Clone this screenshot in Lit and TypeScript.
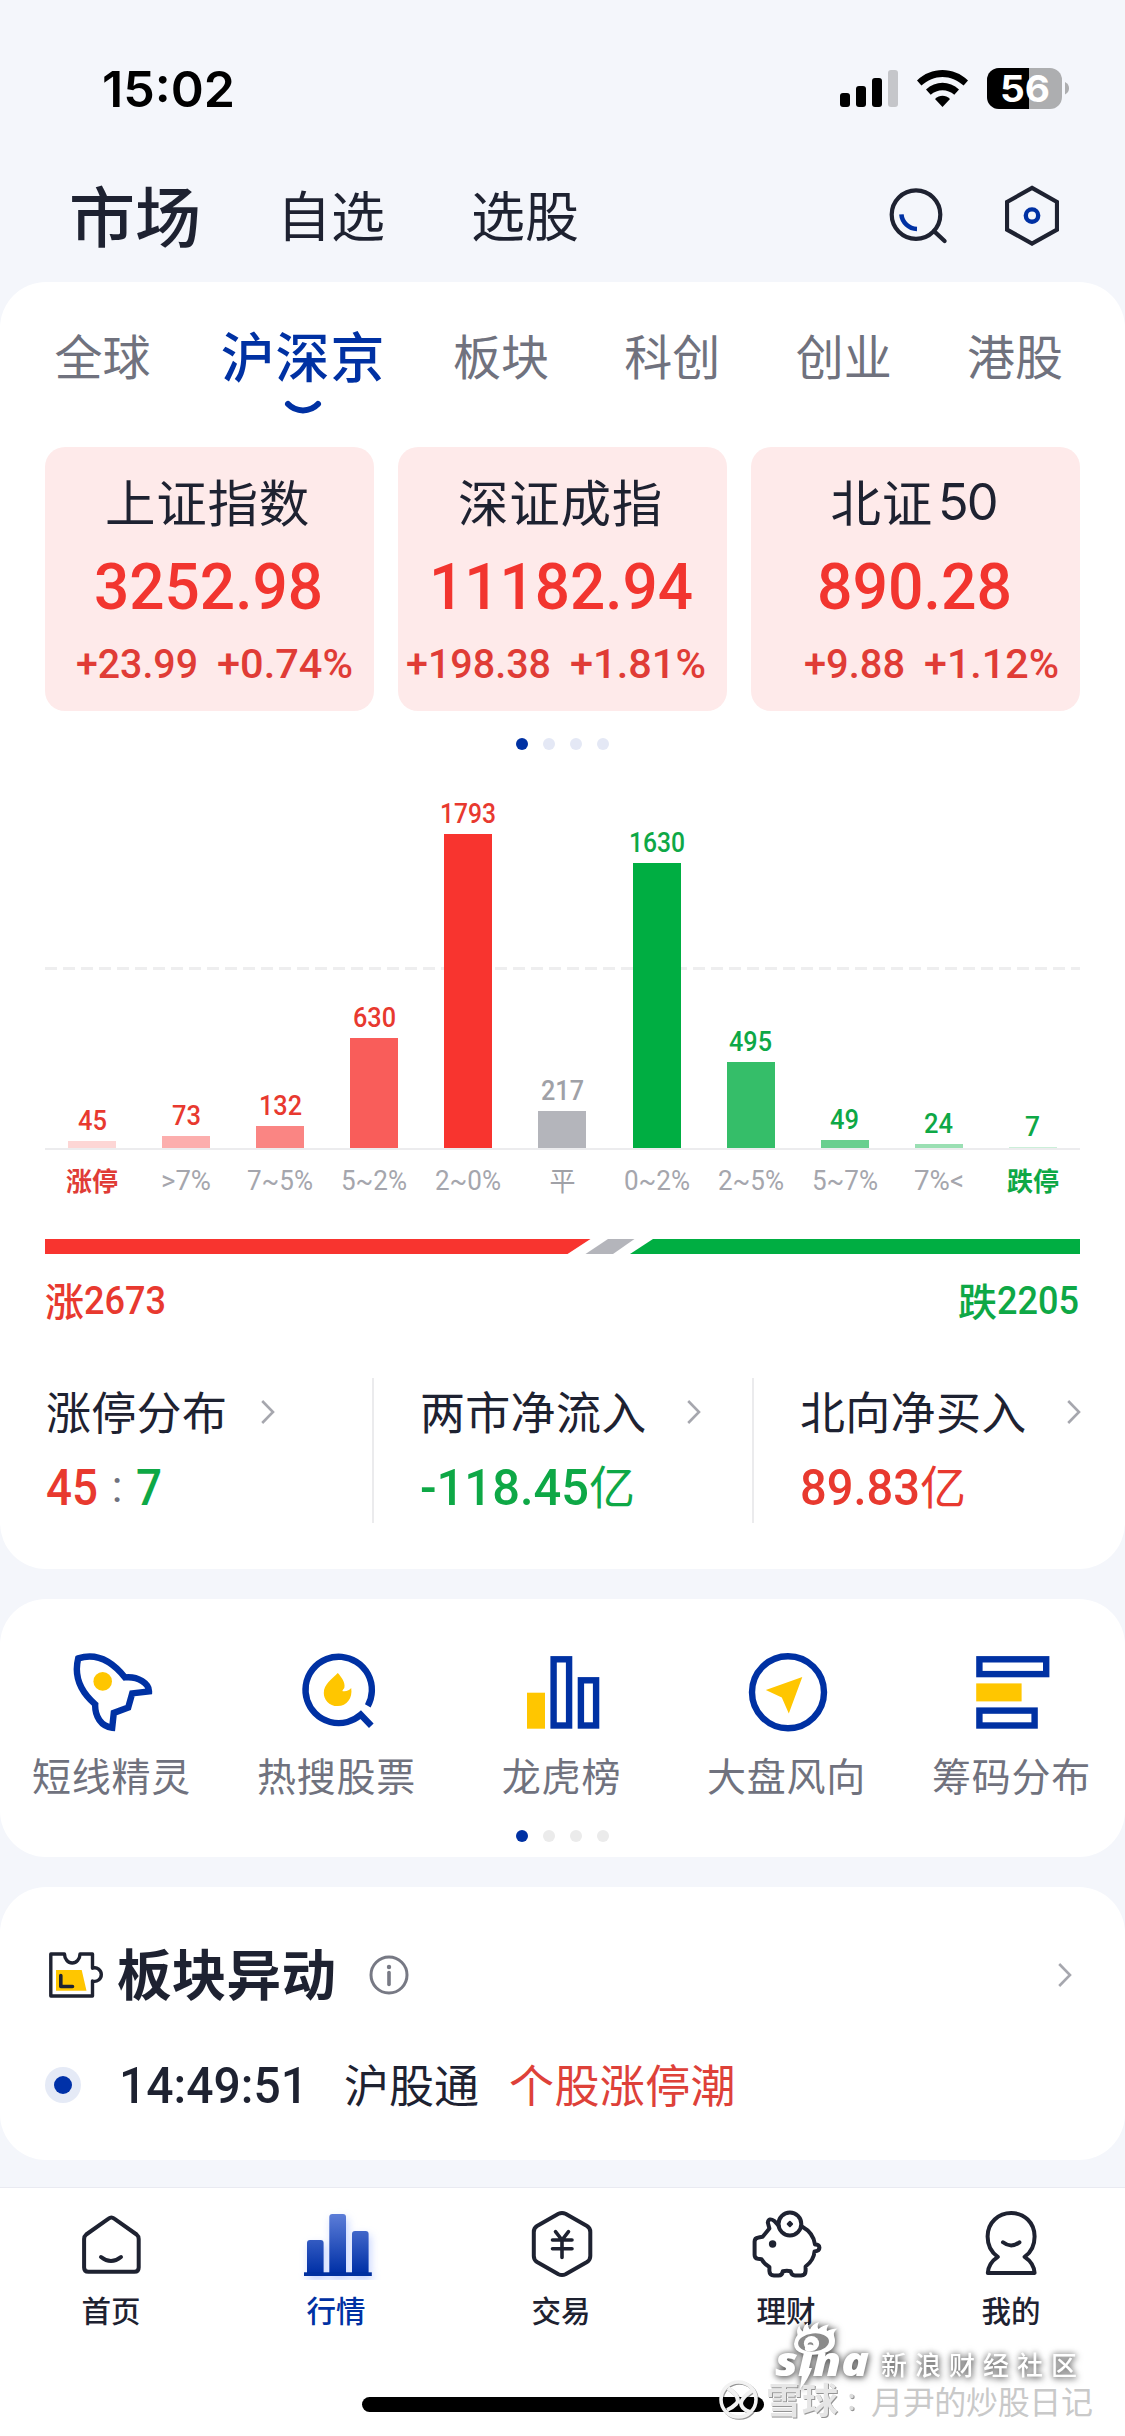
import { LitElement, html, svg, css, TemplateResult } from "lit";
import { customElement, property } from "lit/decorators.js";

/** Numeric text drawn to an exact advance width; its box is the cap-height box. */
@customElement("fit-text")
export class FitText extends LitElement {
  @property() text = "";
  @property({ type: Number }) width = 100;
  @property({ type: Number }) size = 24;
  @property({ type: Number }) cap = 0.711;

  static styles = css`
    :host { display: block; flex: none; }
    .box { display: block; overflow: visible; fill: currentColor; }
  `;

  render() {
    const h = this.size * this.cap;
    return html`<svg class="box" width=${this.width} height=${h}>
      <text x="0" y=${h} font-size=${this.size} textLength=${this.width} lengthAdjust="spacingAndGlyphs">${this.text}</text>
    </svg>`;
  }
}

interface IndexQuote { name: string; digits?: string; value: string; w: number; diff: string; dw: number; pct: string; pw: number; }
interface Bucket { label: string; lw: number; count: string; cw: number; height: number; tone: string; color: string; }

const QUOTES: IndexQuote[] = [
  { name: "上证指数", value: "3252.98", w: 229, diff: "+23.99", dw: 122, pct: "+0.74%", pw: 136 },
  { name: "深证成指", value: "11182.94", w: 264, diff: "+198.38", dw: 145, pct: "+1.81%", pw: 136 },
  { name: "北证", digits: "50", value: "890.28", w: 195, diff: "+9.88", dw: 101, pct: "+1.12%", pw: 135 },
];

const BUCKETS: Bucket[] = [
  { label: "涨停", lw: 0, count: "45", cw: 29, height: 7, tone: "up", color: "#fdd6d5" },
  { label: ">7%", lw: 50, count: "73", cw: 29, height: 12, tone: "up", color: "#fcaead" },
  { label: "7~5%", lw: 66, count: "132", cw: 43, height: 22, tone: "up", color: "#fa8583" },
  { label: "5~2%", lw: 66, count: "630", cw: 43, height: 110, tone: "up", color: "#f95d5a" },
  { label: "2~0%", lw: 66, count: "1793", cw: 56, height: 314, tone: "up", color: "#f8342f" },
  { label: "平", lw: 0, count: "217", cw: 43, height: 37, tone: "flat", color: "#b4b5bb" },
  { label: "0~2%", lw: 66, count: "1630", cw: 56, height: 285, tone: "down", color: "#00ae42" },
  { label: "2~5%", lw: 66, count: "495", cw: 43, height: 86, tone: "down", color: "#35be69" },
  { label: "5~7%", lw: 66, count: "49", cw: 29, height: 8, tone: "down", color: "#6acf8f" },
  { label: "7%<", lw: 50, count: "24", cw: 29, height: 4, tone: "down", color: "#9adfb3" },
  { label: "跌停", lw: 0, count: "7", cw: 15, height: 1, tone: "down", color: "#ccefd9" },
];

const BLUE = "#0031a3";
const GOLD = "#ffc600";
const INK = "#1e2231";

const quickIcon = (cx: number, body: unknown) =>
  html`<svg class="quick-icon" width="100" height="84" viewBox="${cx - 50} 29.6 100 84" fill="none" stroke=${BLUE} stroke-width="6.4">${body}</svg>`;

const QUICK: { label: string; icon: TemplateResult }[] = [
  {
    label: "短线精灵",
    icon: quickIcon(111.8, svg`
      <path d="M78 38 C96 32 112 41 124.8 57 C138 55.5 149 63.5 148.8 71 L132 73 L128 87.2 L113.6 92.5 L112 107.3 C101 106 94.5 96 95 84 C80 71 73.5 56 78 38Z"/>
      <circle cx="102.5" cy="61" r="9.3" fill=${GOLD} stroke="none"/>`),
  },
  {
    label: "热搜股票",
    icon: quickIcon(337.2, svg`
      <path d="M368 85.5 A33.2 33.2 0 1 0 361 94.3 L371.5 105.3"/>
      <path d="M338 52.7 C341 56 345.8 62 344.6 67 C344 69 342 70 343 70.8 C346 71.5 350 70 351.4 67.7 C353 78 347 85.7 338 85.7 C329 85.7 324 79 324 72.5 C324 64 332 59 338 52.7Z" fill=${GOLD} stroke="none"/>`),
  },
  {
    label: "龙虎榜",
    icon: quickIcon(562, svg`
      <rect x="527" y="72.3" width="18" height="36" fill=${GOLD} stroke="none"/>
      <rect x="553.6" y="38.9" width="15.5" height="66.2"/>
      <rect x="580.9" y="59.9" width="15.2" height="45.2"/>`),
  },
  {
    label: "大盘风向",
    icon: quickIcon(787, svg`
      <circle cx="788" cy="71.8" r="36"/>
      <path d="M802.3 56.5 L788.8 93 L781.8 77 L765.8 69.7Z" fill=${GOLD} stroke="none"/>`),
  },
  {
    label: "筹码分布",
    icon: quickIcon(1012, svg`
      <rect x="979.4" y="38.9" width="66.8" height="14.8"/>
      <rect x="976.2" y="63" width="45.4" height="18" fill=${GOLD} stroke="none"/>
      <rect x="979.4" y="90.2" width="55.2" height="14.9"/>`),
  },
];

const navIcon = (cx: number, body: unknown) =>
  html`<svg class="nav-icon" width="90" height="72" viewBox="${cx - 46} 28 90 72" fill="none" stroke=${INK} stroke-width="4" stroke-linejoin="round" stroke-linecap="round">${body}</svg>`;

const NAV: { label: string; active?: boolean; icon: TemplateResult }[] = [
  {
    label: "首页",
    icon: navIcon(112, svg`
      <path d="M108.6 38.6 Q111.4 36.4 114.2 38.6 L136.6 54.5 Q138.7 56.2 138.7 59 V87.5 Q138.7 91.8 134.4 91.8 H88.4 Q84.1 91.8 84.1 87.5 V59 Q84.1 56.2 86.2 54.5Z"/>
      <path d="M101 77 Q111 85 121 77"/>`),
  },
  {
    label: "行情",
    active: true,
    icon: navIcon(337, svg`
      <defs><linearGradient id="bars" gradientUnits="userSpaceOnUse" x1="0" y1="34" x2="0" y2="93">
        <stop offset="0" stop-color="#5c7dd8"/><stop offset="1" stop-color="#0030a6"/></linearGradient></defs>
      <g class="glow" stroke="none" fill="url(#bars)">
        <path d="M307 93 V63 Q307 60 310 60 H320.6 Q323.6 60 323.6 63 V93Z"/>
        <path d="M329.3 93 V37 Q329.3 34 332.3 34 H343 Q346 34 346 37 V93Z"/>
        <path d="M352 93 V54 Q352 51 355 51 H365.6 Q368.6 51 368.6 54 V93Z"/>
        <rect x="304" y="92.3" width="67.8" height="3.7" fill="#0030a0"/>
      </g>`),
  },
  {
    label: "交易",
    icon: navIcon(562, svg`
      <path d="M558.5 33.8 Q562 32 565.5 33.8 L587 46 Q590.3 48 590.3 52 V76 Q590.3 80 587 82 L565.5 94.2 Q562 96 558.5 94.2 L537 82 Q533.8 80 533.8 76 V52 Q533.8 48 537 46Z"/>
      <path d="M555.5 51.7 L562 60 L568.5 51.7 M552.5 60 H572 M552.5 68.7 H572 M562 60 V77.5" stroke-width="3.6"/>`),
  },
  {
    label: "理财",
    icon: navIcon(787, svg`
      <circle cx="789.9" cy="44" r="11.4"/>
      <path d="M789.9 41.8 L792.1 44 L789.9 46.2 L787.7 44Z" stroke-width="2" fill=${INK}/>
      <path d="M778.4 45.5 L774.5 41.2 Q768.8 37 767.8 42.5 L769.4 48.5 L762.6 56.8 L758.5 57.5 Q754.6 58 754.6 61.5 V75 Q754.6 78.3 758 78.8 L761.5 79.2 Q764 84 769.4 87 V91 Q769.6 95.4 774 95.5 H778.5 Q782.4 95.5 782.8 91.2 Q787 90.4 790.6 91.2 Q791.4 95.5 795 95.5 H801 Q805.5 95.4 805.6 91 V86.5 Q814 80 814.5 71.5 Q819.6 71 819.4 67.5 Q819 64.4 815 64.6 Q813.6 53 802 46.5"/>
      <circle cx="772.6" cy="64" r="3.7" fill=${INK} stroke="none"/>`),
  },
  {
    label: "我的",
    icon: navIcon(1012, svg`
      <path d="M997.8 76.8 C993 73.5 987.6 67 987.6 56.5 C987.6 42.5 998.5 33 1011.2 33 C1024 33 1034.6 42.5 1034.6 56.5 C1034.6 67 1029.5 73.5 1024.6 76.8 Q1034 83 1034.6 93 H987.8 Q988.4 83 997.8 76.8Z"/>
      <path d="M1003 62.3 Q1011 68.6 1019.4 62.3"/>`),
  },
];

const chevron = () =>
  html`<svg class="chevron" width="14" height="24" viewBox="0 0 14 24" fill="none" stroke="#a6a7ae" stroke-width="2.6"><path d="M1.2 1 L12 12 L1.2 23"/></svg>`;

const pager = (cls: string) => html`<div class="pager ${cls}"><i class="dot on"></i><i class="dot"></i><i class="dot"></i><i class="dot"></i></div>`;

@customElement("app-root")
export class AppRoot extends LitElement {
  static styles = css`
    :host {
      display: block; position: relative; width: 1125px; height: 2436px; overflow: hidden;
      background: #f4f6fb; color: #1e2231;
      font-family: "Noto Sans CJK SC", "Noto Sans", sans-serif;
    }
    * { box-sizing: border-box; }
    .zh { line-height: 1; padding-bottom: 0.07em; white-space: nowrap; }
    fit-text { font-family: Roboto, "Liberation Sans", sans-serif; font-weight: 500; }
    .up { color: #e8392f; }
    .down { color: #0ea846; }
    .flat { color: #a0a1a7; }
    svg { display: block; flex: none; }

    .status { display: flex; height: 148px; padding: 30px 55px 0 102px; align-items: center; justify-content: space-between; color: #000; }
    .status fit-text { font-family: Inter, sans-serif; font-weight: 600; }
    .status-icons { font-family: Inter, sans-serif; font-weight: 700; }

    .top { display: flex; height: 134px; padding: 0 66px 0 69px; align-items: center; }
    .top-tab { font-size: 54px; margin-left: 80px; padding-bottom: 0.03em; }
    .top-tab.main { font-size: 66px; font-weight: 500; margin-left: 0; padding-bottom: 0.07em; }
    .top-tab.second { margin-left: 76px; margin-right: 6px; }
    .top-icons { display: flex; margin-left: auto; gap: 56px; align-items: center; }

    .card { background: #fff; border-radius: 46px; }
    .market { height: 1287px; padding: 0 45px; display: flex; flex-direction: column; }
    .tabs { display: flex; height: 165px; gap: 75.3px; padding-left: 9.5px; }
    .tab { display: flex; flex-direction: column; align-items: center; height: 150px; color: #70727e; font-size: 48px; }
    .tab-name { display: flex; align-items: center; height: 148px; }
    .tab.active { color: #0031a3; font-size: 54px; letter-spacing: 0.8px; font-weight: 500; margin: 0 -7.5px 0 -5px; }
    .tab.active .tab-name { height: 118px; padding-top: 32px; }

    .quotes { display: grid; grid-template-columns: repeat(3, 1fr); gap: 24px; }
    .quote { height: 264px; border-radius: 20px; background: #feeaea; display: flex; flex-direction: column; align-items: center; padding-top: 30px; }
    .quote-name { font-size: 50.5px; letter-spacing: 0.8px; height: 50px; padding-right: 4px; display: flex; align-items: center; }
    .quote-digits { font-family: Inter, sans-serif; font-weight: 400; letter-spacing: -2px; line-height: 50px; margin-left: 5px; }
    .quote-value { margin: 36px 3px 0 0; color: #f2352f; }
    .quote-sub { align-self: flex-end; display: flex; gap: 19px; margin-top: 40px; padding-right: 21px; color: #e03c36; }
    .quote-sub fit-text { font-weight: 500; }

    .pager { display: flex; justify-content: center; align-items: center; gap: 15px; height: 66px; }
    .pager.short { height: 36px; }
    .dot { width: 12px; height: 12px; border-radius: 50%; background: #e4e8f5; }
    .pager.short .dot { background: #ebebeb; }
    .pager .dot.on { background: #0031a3; }

    .chart { display: grid; grid-template-columns: repeat(11, 1fr); height: 373px; align-items: end; border-bottom: 2px solid #ececee;
      background: repeating-linear-gradient(90deg, #eeeeef 0 12px, transparent 12px 18px) 0 190px / 100% 3px no-repeat; }
    .column { display: flex; flex-direction: column; align-items: center; gap: 11px; }
    .bar { width: 48px; }
    .axis { display: grid; grid-template-columns: repeat(11, 1fr); height: 62px; align-items: center; justify-items: center; font-size: 26px; color: #a5a6ad; }
    .axis fit-text { font-weight: 400; }
    .axis .limit { font-weight: 700; }
    .axis .limit.up { color: #e03c36; }
    .ratio { margin-top: 27px; }
    .totals { display: flex; height: 94px; justify-content: space-between; align-items: center; }
    .total { display: flex; align-items: center; font-size: 39px; font-weight: 500; }
    .total.down { padding-right: 1px; }

    .stats { display: grid; grid-template-columns: 329px 380px 1fr; height: 145px; margin-top: 30px; }
    .stat { border-right: 2px solid #ebebed; padding-left: 1px; }
    .stat + .stat { padding-left: 46px; }
    .stat:last-child { border: 0; }
    .stat-name { display: flex; align-items: center; height: 68px; font-size: 45px; letter-spacing: 0.3px; gap: 40px; }
    .stat-name.tight { gap: 34px; }
    .stat-value { display: flex; align-items: center; height: 36px; margin-top: 23px; }
    .unit { font-size: 46px; padding-bottom: 0.11em; }
    .colon-text { font-family: Roboto, sans-serif; font-size: 44px; line-height: 36px; width: 38px; text-align: center; color: #6f717d; }

    .quick { height: 258px; margin-top: 30px; padding-top: 51px; }
    .quick-row { display: grid; grid-template-columns: repeat(5, 225px); margin-left: -1px; }
    .quick-item { display: flex; flex-direction: column; align-items: center; }
    .quick-label { display: flex; align-items: center; height: 84px; font-size: 39px; letter-spacing: 0.8px; color: #70727e; }

    .moves { height: 273px; margin-top: 30px; padding: 0 53px 0 45px; }
    .moves-head { display: flex; align-items: center; height: 176px; }
    .moves-title { font-size: 54.5px; font-weight: 700; letter-spacing: 0.3px; margin: 0 32px 0 10px; padding-bottom: 0.1em; }
    .moves-head .chevron { margin-left: auto; }
    .moves-row { display: flex; align-items: center; height: 44px; font-size: 45px; }
    .halo { width: 36px; height: 36px; border-radius: 50%; background: #e5eaf6; display: grid; place-items: center; }
    .halo-dot { width: 18px; height: 18px; border-radius: 50%; background: #0031a8; }
    .moves-time { margin: 0 36px 0 38px; }
    .moves-topic { margin-left: 30px; letter-spacing: 0.4px; color: #de4139; }

    .nav { height: 249px; margin-top: 27px; background: #fff; border-top: 1px solid #e9eaf1; padding-top: 20px; }
    .nav-row { display: grid; grid-template-columns: repeat(5, 225px); margin-left: -1.5px; }
    .nav-item { display: flex; flex-direction: column; align-items: center; }
    .nav-label { display: flex; align-items: center; height: 62px; font-size: 29.5px; font-weight: 500; }
    .nav-item.active { color: #0031a3; }
    .glow { filter: drop-shadow(2px 4px 4px rgba(90, 130, 255, 0.35)); }
    .home-bar { width: 402px; height: 15px; border-radius: 8px; background: #000; margin: 55px 0 0 362px; }

    .marks { position: absolute; left: 700px; top: 2310px; width: 425px; height: 126px; }
    .shade { filter: drop-shadow(0 0 3px rgba(0, 0, 0, 0.5)) drop-shadow(1px 2px 3px rgba(0, 0, 0, 0.4)); }
    .mark-logo { font-family: "Open Sans", "DejaVu Sans", sans-serif; font-weight: 800; font-style: italic; }
    .mark-soft { filter: drop-shadow(1.5px 1.5px 0.5px rgba(0, 0, 0, 0.42)); }
  `;

  private statusIcons() {
    return html`<svg class="status-icons" width="230" height="44" viewBox="840 67 230 44">
      <rect x="840" y="93" width="10" height="14" rx="3"/><rect x="856" y="86" width="10" height="21" rx="3"/>
      <rect x="872" y="78" width="10" height="29" rx="3"/><rect x="888" y="70" width="10" height="37" rx="3" fill="#c5c6ca"/>
      <path d="M917 80.5 C931 66.5 954 66.5 968 80.5 L963.6 85.6 C951.5 74 933.5 74 921.4 85.6Z"/>
      <path d="M926 89.6 C935.5 80.6 949.5 80.6 959 89.6 L954.3 94.8 C947.6 88.8 937.4 88.8 930.7 94.8Z"/>
      <path d="M935 99 C939.5 94.6 945.5 94.6 950 99 L942.5 107Z"/>
      <clipPath id="cell"><rect x="987" y="68" width="75" height="41" rx="12"/></clipPath>
      <g clip-path="url(#cell)"><rect x="987" y="68" width="75" height="41" fill="#adaeb0"/><rect x="987" y="68" width="42" height="41"/></g>
      <path d="M1065 82 Q1069 84 1069 88.3 Q1069 92.5 1065 94.5Z" fill="#adaeb0"/>
      <text x="1000" y="102.2" font-size="37" textLength="50" lengthAdjust="spacingAndGlyphs" fill="#fff">56</text>
    </svg>`;
  }

  private tab(name: string, active = false) {
    return html`<div class="tab ${active ? "active" : ""}">
      <div class="tab-name"><span class="zh">${name}</span></div>
      ${active ? html`<svg width="38" height="14" viewBox="0 0 38 14" fill="none" stroke="#0031a3" stroke-width="6" stroke-linecap="round"><path d="M4 4 C12 12.5 26 12.5 34 4"/></svg>` : ""}
    </div>`;
  }

  private watermark() {
    return html`<svg class="marks" viewBox="700 2310 425 126">
      <g class="shade" fill="#fff">
        <path d="M794 2344 Q795 2338 797.5 2335 Q796 2329 799.5 2325.5 Q800 2330 803 2331.5 Q803 2325.5 808 2322.5 Q807.5 2327.5 810 2329.5 Q812 2324 819 2322 Q816.5 2326.5 818.5 2329 Q823 2325 829 2324.5 Q826 2328 827 2331 Q831 2328.5 837.5 2328.5 Q833 2332 834 2335.5 Q838 2348 826 2352.5 Q815 2356.5 803 2353.5 Q794 2351 794 2344Z"/>
        <ellipse cx="813.5" cy="2342.5" rx="15.5" ry="9" fill="#8b8b8b" transform="rotate(-6 813 2342)"/>
        <circle cx="811.5" cy="2343.5" r="7.6"/>
        <circle cx="810.5" cy="2345" r="2.8" fill="#8b8b8b"/>
        <text class="mark-logo" x="775" y="2376" font-size="41" textLength="94" lengthAdjust="spacingAndGlyphs">sina</text>
        <path d="M802.5 2368 L812 2368 Q808 2380 800 2389 Q801.5 2379 802.5 2368Z"/>
        <text x="881" y="2375" font-size="26" textLength="196" font-weight="500">新浪财经社区</text>
      </g>
      <g class="mark-soft">
        <circle cx="738.5" cy="2399.5" r="17.5" fill="none" stroke="#f2f2f2" stroke-width="3.6"/>
        <path d="M728 2388 Q742 2398 736 2404 Q732 2408 727 2410 M753 2390 Q742 2397 741 2403 Q741 2409 750 2412" fill="none" stroke="#f2f2f2" stroke-width="4"/>
        <text x="766" y="2414" font-size="36" font-weight="700" fill="#e6e6e6">雪球</text>
        <circle cx="851.5" cy="2396" r="2.2" fill="#dcdcdc"/><circle cx="851.5" cy="2408" r="2.2" fill="#dcdcdc"/>
      </g>
      <text x="871" y="2414" font-size="32" textLength="222" fill="#c9c9c9">月尹的炒股日记</text>
    </svg>`;
  }

  render() {
    return html`
      <div class="status"><fit-text text="15:02" width="133" size="49.5" cap="0.727"></fit-text>${this.statusIcons()}</div>
      <div class="top">
        <div class="top-tab main zh">市场</div><div class="top-tab second zh">自选</div><div class="top-tab zh">选股</div>
        <div class="top-icons">
          <svg width="62" height="62" viewBox="887 184.4 62 62" fill="none" stroke=${INK} stroke-width="4.2">
            <circle cx="916" cy="215" r="24.3"/><path d="M934 231.5 L944.6 241.4" stroke-linecap="round"/>
            <path d="M901.4 214.8 A16 16 0 0 0 917 229.4" stroke=${BLUE} stroke-width="4.6"/>
          </svg>
          <svg width="54" height="62" viewBox="1005 184.4 54 62" fill="none" stroke=${INK} stroke-width="4.2">
            <path d="M1032 188.3 L1057 202.4 V230 L1032 244 L1007 230 V202.4Z"/><circle cx="1032" cy="216" r="6.2" stroke=${BLUE} stroke-width="4.4"/>
          </svg>
        </div>
      </div>

      <section class="card market">
        <div class="tabs">${this.tab("全球")}${this.tab("沪深京", true)}${this.tab("板块")}${this.tab("科创")}${this.tab("创业")}${this.tab("港股")}</div>
        <div class="quotes">${QUOTES.map((q) => html`<div class="quote">
          <div class="quote-name"><span class="zh">${q.name}</span>${q.digits ? html`<span class="quote-digits">${q.digits}</span>` : ""}</div>
          <fit-text class="quote-value" .text=${q.value} .width=${q.w} .size=${65}></fit-text>
          <div class="quote-sub"><fit-text .text=${q.diff} .width=${q.dw} .size=${41}></fit-text><fit-text .text=${q.pct} .width=${q.pw} .size=${41}></fit-text></div>
        </div>`)}</div>
        ${pager("")}
        <div class="chart">${BUCKETS.map((b) => html`<div class="column">
          <fit-text class=${b.tone} .text=${b.count} .width=${b.cw} .size=${27}></fit-text>
          <div class="bar" style="height:${b.height}px;background:${b.color}"></div>
        </div>`)}</div>
        <div class="axis">${BUCKETS.map((b) => b.lw
          ? html`<fit-text .text=${b.label} .width=${b.lw} .size=${27}></fit-text>`
          : html`<span class="zh ${b.tone} ${b.tone === "flat" ? "" : "limit"}">${b.label}</span>`)}</div>
        <svg class="ratio" width="1035" height="15">
          <polygon points="0,0 545.5,0 522.5,15 0,15" fill="#f8342f"/><polygon points="563,0 589.5,0 568,15 540.5,15" fill="#b4b5bb"/>
          <polygon points="608,0 1035,0 1035,15 585,15" fill="#00ae42"/>
        </svg>
        <div class="totals">
          <div class="total up"><span class="zh">涨</span><fit-text text="2673" width="82" size="38.5"></fit-text></div>
          <div class="total down"><span class="zh">跌</span><fit-text text="2205" width="82" size="38.5"></fit-text></div>
        </div>
        <div class="stats">
          <div class="stat"><div class="stat-name tight"><span class="zh">涨停分布</span>${chevron()}</div>
            <div class="stat-value"><fit-text class="up" text="45" width="52" size="50"></fit-text><span class="colon-text">:</span><fit-text class="down" text="7" width="26" size="50"></fit-text></div></div>
          <div class="stat"><div class="stat-name"><span class="zh">两市净流入</span>${chevron()}</div>
            <div class="stat-value down"><fit-text text="-118.45" width="169" size="50"></fit-text><span class="unit zh">亿</span></div></div>
          <div class="stat"><div class="stat-name"><span class="zh">北向净买入</span>${chevron()}</div>
            <div class="stat-value up"><fit-text text="89.83" width="120" size="50"></fit-text><span class="unit zh">亿</span></div></div>
        </div>
      </section>

      <section class="card quick">
        <div class="quick-row">${QUICK.map((q) => html`<div class="quick-item">${q.icon}<div class="quick-label"><span class="zh">${q.label}</span></div></div>`)}</div>
        ${pager("short")}
      </section>

      <section class="card moves">
        <div class="moves-head">
          <svg width="62" height="56" viewBox="5 7 62 56" fill="none" stroke=${INK} stroke-width="3.4" stroke-linejoin="round">
            <path d="M16 30 H41.7 L46.5 50.7 H16Z" fill=${GOLD} stroke="none"/>
            <path d="M10.8 14 H24.5 C24.5 19 28 23 32.2 23 C36.5 23 40 19 40 14 H52.5 V28.2 C57 26.5 61.3 30 61.3 34.5 C61.3 39 57 42.5 52.5 41 V56 H10.8Z"/>
            <path d="M20.8 35.5 V46.5 H32.5" stroke-linecap="round" stroke-width="3.6"/>
          </svg>
          <span class="moves-title zh">板块异动</span>
          <svg width="42" height="42" viewBox="0 0 42 42" fill="none" stroke="#777984" stroke-width="3"><circle cx="21" cy="21" r="18"/><path d="M21 18.5 V30.5" stroke-width="3.6" stroke-linecap="round"/><circle cx="21" cy="13" r="2.2" fill="#777984" stroke="none"/></svg>
          ${chevron()}
        </div>
        <div class="moves-row">
          <span class="halo"><i class="halo-dot"></i></span>
          <fit-text class="moves-time" text="14:49:51" width="189" size="50"></fit-text>
          <span class="zh">沪股通</span><span class="zh moves-topic">个股涨停潮</span>
        </div>
      </section>

      <nav class="nav">
        <div class="nav-row">${NAV.map((n) => html`<div class="nav-item ${n.active ? "active" : ""}">${n.icon}<div class="nav-label"><span class="zh">${n.label}</span></div></div>`)}</div>
        <div class="home-bar"></div>
      </nav>
      ${this.watermark()}
    `;
  }
}
